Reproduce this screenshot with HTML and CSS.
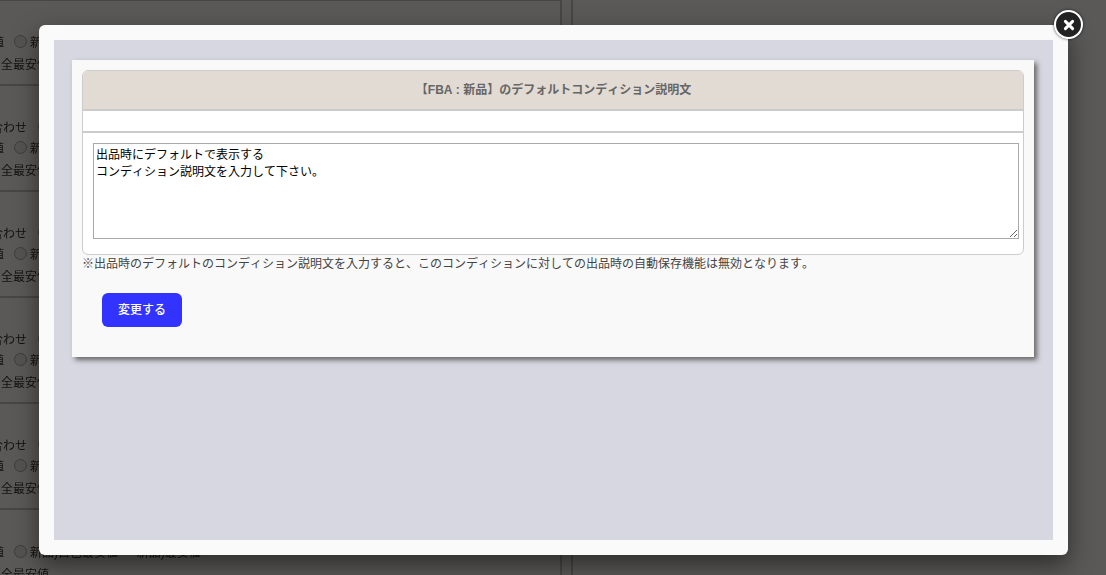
FILE: index.html
```html
<!DOCTYPE html>
<html lang="ja">
<head>
<meta charset="utf-8">
<title>デフォルトコンディション説明文</title>
<link rel="stylesheet" href="styles.css">
</head>
<body>
<div class="page">
  <div class="left-col">
    <section class="bg-row short"><p class="line"><span class="cut">最安値</span><i class="radio"></i><span>新品</span></p><p class="line low">全最安値</p></section>
    <section class="bg-row"><p class="line"><span class="match">合わせ</span><i class="radio"></i></p><p class="line"><span class="cut">最安値</span><i class="radio"></i><span>新品</span></p><p class="line low">全最安値</p></section>
    <section class="bg-row"><p class="line"><span class="match">合わせ</span><i class="radio"></i></p><p class="line"><span class="cut">最安値</span><i class="radio"></i><span>新品</span></p><p class="line low">全最安値</p></section>
    <section class="bg-row"><p class="line"><span class="match">合わせ</span><i class="radio"></i></p><p class="line"><span class="cut">最安値</span><i class="radio"></i><span>新品</span></p><p class="line low">全最安値</p></section>
    <section class="bg-row"><p class="line"><span class="match">合わせ</span><i class="radio"></i></p><p class="line"><span class="cut">最安値</span><i class="radio"></i><span>新品</span></p><p class="line low">全最安値</p></section>
    <section class="bg-row short"><p class="line"><span class="cut">最安値</span><i class="radio"></i><span>新品)自己最安値 ー 新品)最安値</span></p><p class="line low">全最安値</p></section>
  </div>
  <div class="right-col"></div>
</div>
<div class="overlay"></div>
<div class="modal">
  <button class="close" type="button" aria-label="閉じる">
    <svg viewBox="0 0 12 12" width="12" height="12"><path d="M2.4 2.4 9.6 9.6M9.6 2.4 2.4 9.6"/></svg>
  </button>
  <div class="frame">
    <div class="panel">
      <div class="box">
        <h2 class="box-head">【FBA : 新品】のデフォルトコンディション説明文</h2>
        <div class="box-gap"></div>
        <div class="box-body">
          <textarea class="desc">出品時にデフォルトで表示する
コンディション説明文を入力して下さい。</textarea>
        </div>
      </div>
      <p class="note">※出品時のデフォルトのコンディション説明文を入力すると、このコンディションに対しての出品時の自動保存機能は無効となります。</p>
      <button class="submit" type="button">変更する</button>
    </div>
  </div>
</div>
</body>
</html>
```
FILE: styles.css
```css
* { box-sizing: border-box; }
html, body { margin: 0; height: 100%; overflow: hidden; }
body {
  font-family: "Liberation Sans", "Noto Sans CJK JP", sans-serif;
  font-size: 12px;
  font-kerning: none;
  color: #333;
  background: #fff;
}
.page { display: flex; height: 575px; overflow: hidden; filter: blur(0.5px); }
.left-col { width: 562px; flex: none; border-right: 2px solid #c8c8c8; border-top: 2px solid #c8c8c8; margin-top: -1px; }
.right-col { flex: 1; margin-left: 9px; border-left: 2px solid #c8c8c8; }
.bg-row { height: 106px; padding-top: 32px; border-bottom: 2px solid #c8c8c8; overflow: hidden; }
.bg-row.short { height: 85px; padding-top: 32px; }
.bg-row + .bg-row.short { padding-top: 33px; }
.bg-row p { margin: 0; height: 21px; line-height: 21px; font-size: 12px; color: #333; white-space: nowrap; display: flex; align-items: center; }
.cut { flex: none; width: 36px; margin-left: -32px; text-align: right; }
.match { flex: none; width: 36px; margin-left: -9px; }
.radio { flex: none; width: 13px; height: 13px; margin: -4px 3px 0 10px; border: 1px solid #aaa; border-radius: 50%; background: #eee; }
.match + .radio { margin-left: 11px; }
.bg-row p.low { padding-left: 1px; height: 22px; }
.overlay { position: fixed; inset: 0; background: rgba(4, 3, 0, 0.66); }
.modal {
  position: fixed;
  left: 39px;
  top: 25px;
  width: 1029px;
  height: 530px;
  padding: 15px;
  background: #fafafa;
  border-radius: 6px;
  box-shadow: 0 10px 25px rgba(0, 0, 0, 0.5);
}
.close {
  position: absolute;
  top: -15px;
  right: -15px;
  width: 29px;
  height: 29px;
  padding: 0;
  display: flex;
  align-items: center;
  justify-content: center;
  background: #222;
  border: 2px solid #fff;
  border-radius: 50%;
  box-shadow: 0 0 3px rgba(0, 0, 0, 0.7);
}
.close svg { fill: none; stroke: #fff; stroke-width: 3; stroke-linecap: round; }
.frame { height: 500px; padding: 20px 19px 0 18px; background: #d7d7e1; }
.panel {
  height: 297px;
  padding: 10px 10px 0;
  background: #f9f9f9;
  box-shadow: 3px 3px 5px #666;
}
.box { border: 1px solid #ccc; border-radius: 6px; background: #fff; height: 185px; overflow: hidden; }
.box-head {
  margin: 0;
  height: 40px;
  line-height: 38px;
  padding-left: 1px;
  text-align: center;
  font-size: 12px;
  font-weight: bold;
  color: #666;
  background: #e2dbd4;
  border-bottom: 2px solid #ccc;
}
.box-gap { height: 22px; background: #fff; border-bottom: 2px solid #ccc; }
.box-body { padding: 10px 4px 0 10px; }
.desc {
  display: block;
  width: 926px;
  height: 96px;
  margin: 0;
  padding: 3px 2px 2px;
  border: 1px solid #a9a9a9;
  border-radius: 0;
  background: #fff;
  color: #000;
  font-family: "Liberation Sans", "Noto Sans CJK JP", sans-serif;
  font-size: 12px;
  line-height: 17px;
  font-kerning: none;
}
.note { margin: 0; padding-top: 1px; height: 38px; line-height: 17px; font-size: 12px; color: #444; white-space: nowrap; }
.submit {
  display: block;
  margin-left: 20px;
  width: 80px;
  height: 34px;
  padding: 0 0 3px;
  background: #3333ff;
  color: #fff;
  border: 0;
  border-radius: 6px;
  font-family: "Liberation Sans", "Noto Sans CJK JP", sans-serif;
  font-size: 12px;
  font-weight: 500;
  font-kerning: none;
}
```
